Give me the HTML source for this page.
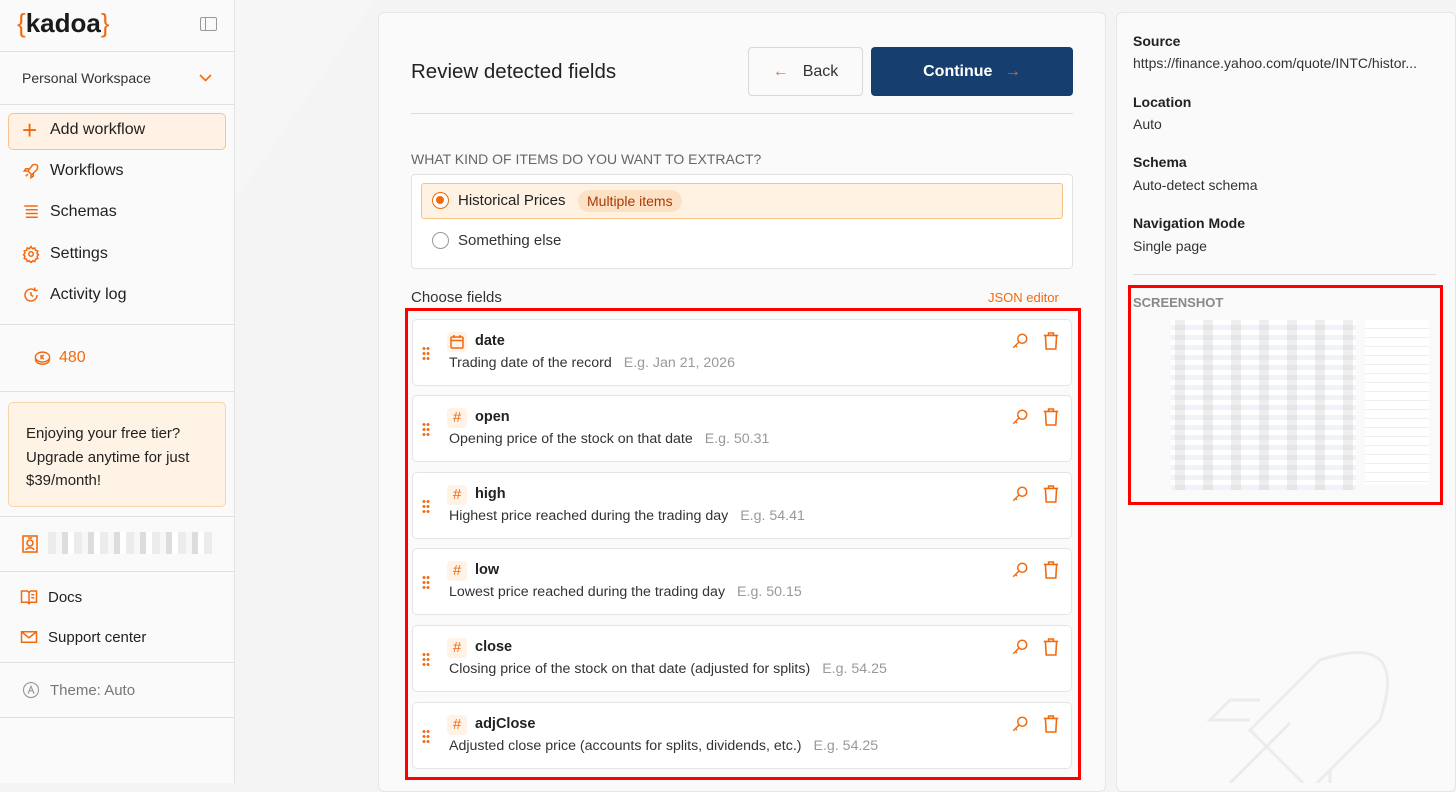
<!DOCTYPE html>
<html><head><meta charset="utf-8"><style>
*{box-sizing:border-box;margin:0;padding:0}
body{width:1456px;height:783px;overflow:hidden;background:#f4f4f4;font-family:"Liberation Sans",sans-serif;color:#1f1f1f;position:relative}
.sb{position:absolute;left:0;top:0;width:235px;height:783px;background:#fafafa;border-right:1px solid #e2e2e2}
.hr{position:absolute;left:0;width:234px;height:1px;background:#e0e0e0}
.nav{position:absolute;left:22px;font-size:16px;display:flex;align-items:center;gap:10px}
.nav svg{width:18px;height:18px}
.o{color:#f26a0f}
.card{position:absolute;left:378px;top:12px;width:728px;height:780px;background:#fafafa;border:1px solid #e6e6e6;border-radius:6px}
.rp{position:absolute;left:1116px;top:12px;width:340px;height:780px;background:#fafafa;border:1px solid #e6e6e6;border-radius:6px}
.f{position:absolute;left:412px;width:660px;height:67px;background:#fff;border:1px solid #e4e4e4;border-radius:5px}
.f .n{position:absolute;left:62px;top:13px;font-size:14.5px;font-weight:bold;color:#222}
.f .d{position:absolute;left:36px;top:35px;font-size:14.2px;color:#333}
.f .d span{color:#999;margin-left:12px}
.f .ic{position:absolute;left:34px;top:12px;width:20px;height:20px;background:#fff3e8;border-radius:4px;color:#f26a0f;font-size:15px;text-align:center;line-height:20px}
.f .dots{position:absolute;left:9px;top:26px;width:8px;height:14px;background:radial-gradient(circle,#f26a0f 1.3px,transparent 1.6px) 0 0/4px 5px}
.f .k{position:absolute;left:598px;top:12px}
.f .t{position:absolute;left:630px;top:12px}
.lbl{position:absolute;left:1133px;font-size:14px;font-weight:bold;color:#222}
.val{position:absolute;left:1133px;font-size:14px;color:#333}
</style></head><body>
<svg style="position:absolute;left:235px;top:0" width="1221" height="783"><polygon points="0,0 140,0 0,200" fill="#f6f6f6"/><polygon points="1221,500 1000,783 1221,783" fill="#f7f7f7"/></svg>
<div class="sb">
 <div style="position:absolute;left:17px;top:8px;font-size:26px;letter-spacing:0px;color:#1a1a1a"><span class="o">{</span><b>kadoa</b><span class="o">}</span></div>
 <div style="position:absolute;left:200px;top:17px;width:17px;height:14px;border:1.5px solid #999;border-radius:2px"><div style="width:5px;height:100%;border-right:1.5px solid #999"></div></div>
 <div class="hr" style="top:51px"></div>
 <div style="position:absolute;left:22px;top:70px;font-size:14px;color:#333">Personal Workspace</div>
 <svg style="position:absolute;left:199px;top:74px" width="13" height="8" viewBox="0 0 13 8" fill="none" stroke="#f26a0f" stroke-width="1.6"><path d="M1 1l5.5 5.5L12 1"/></svg>
 <div class="hr" style="top:104px"></div>
 <div style="position:absolute;left:8px;top:113px;width:218px;height:37px;background:#fff1e3;border:1px solid #f7c28e;border-radius:5px"></div>
 <div class="nav" style="top:121px"><span class="o" style="font-size:26px;line-height:18px;width:18px">+</span>Add workflow</div>
 <div class="nav" style="top:162px"><svg viewBox="0 0 24 24" fill="none" stroke="#f26a0f" stroke-width="2"><path d="M5 19l3-3M14 4c3-1 5-1 6 0 1 1 1 3 0 6l-7 7-5-5zM9 9H5l-2 3h4M15 15v4l-3 2v-4"/></svg>Workflows</div>
 <div class="nav" style="top:203px"><svg viewBox="0 0 24 24" fill="none" stroke="#f26a0f" stroke-width="2"><path d="M3 4h18M5 9h16M5 14h16M5 19h16"/></svg>Schemas</div>
 <div class="nav" style="top:245px"><svg viewBox="0 0 24 24" fill="none" stroke="#f26a0f" stroke-width="2"><circle cx="12" cy="12" r="3"/><path d="M12 2l2 3 3-1 1 3 3 1-1 3 2 2-2 2 1 3-3 1-1 3-3-1-2 3-2-3-3 1-1-3-3-1 1-3-2-2 2-2-1-3 3-1 1-3 3 1z"/></svg>Settings</div>
 <div class="nav" style="top:286px"><svg viewBox="0 0 24 24" fill="none" stroke="#f26a0f" stroke-width="2"><path d="M20 12a8 8 0 1 1-3-6.2M17 2v4h4M12 8v4l3 2"/></svg>Activity log</div>
 <div class="hr" style="top:324px"></div>
 <div class="o" style="position:absolute;left:34px;top:349px;font-size:16px;display:flex;gap:8px;align-items:center"><svg width="17" height="15" viewBox="0 0 24 20" fill="none" stroke="#f26a0f" stroke-width="2"><ellipse cx="12" cy="8" rx="10" ry="7"/><path d="M2 11c0 4 4 7 10 7s10-3 10-7M10 5v6M10 8l4-3M11 8l3 3"/></svg>480</div>
 <div class="hr" style="top:391px"></div>
 <div style="position:absolute;left:8px;top:402px;width:218px;height:105px;background:#fff3e6;border:1px solid #f8d3ac;border-radius:5px;padding:19px 17px;font-size:15px;line-height:23.5px;color:#222">Enjoying your free tier? Upgrade anytime for just $39/month!</div>
 <div class="hr" style="top:516px"></div>
 <svg style="position:absolute;left:22px;top:535px" width="16" height="18" viewBox="0 0 16 18" fill="none" stroke="#f26a0f" stroke-width="1.6"><rect x="1" y="1" width="14" height="16"/><circle cx="8" cy="8" r="3"/><path d="M4 15c1-3 7-3 8 0M6 3h4"/></svg>
 <div style="position:absolute;left:48px;top:532px;width:164px;height:22px;background:repeating-linear-gradient(90deg,#ececec 0 8px,#f7f7f7 8px 14px,#dddddd 14px 20px,#fff 20px 26px)"></div>
 <div class="hr" style="top:571px"></div>
 <div class="nav" style="top:588px;font-size:15px;left:20px"><svg viewBox="0 0 24 24" fill="none" stroke="#f26a0f" stroke-width="2"><path d="M2 4h8l2 2 2-2h8v15h-8l-2 2-2-2H2zM12 6v15M15 9h4M15 13h4"/></svg>Docs</div>
 <div class="nav" style="top:628px;font-size:15px;left:20px"><svg viewBox="0 0 24 24" fill="none" stroke="#f26a0f" stroke-width="2"><rect x="2" y="5" width="20" height="14"/><path d="M2 5l10 8 10-8"/></svg>Support center</div>
 <div class="hr" style="top:662px"></div>
 <div class="nav" style="top:681px;font-size:15px;left:22px;color:#777"><svg viewBox="0 0 24 24" fill="none" stroke="#999" stroke-width="1.5"><circle cx="12" cy="12" r="10"/><path d="M8 17l4-10 4 10M9.5 13h5"/></svg>Theme: Auto</div>
 <div class="hr" style="top:717px"></div>
</div>

<div class="card"></div>
<div style="position:absolute;left:411px;top:60px;font-size:20.5px;color:#222">Review detected fields</div>
<div style="position:absolute;left:748px;top:47px;width:115px;height:49px;background:#fafafa;border:1px solid #d8d8d8;border-radius:4px;font-size:16px;line-height:47px;text-align:center;color:#333"><span class="o" style="margin-right:14px">←</span>Back</div>
<div style="position:absolute;left:871px;top:47px;width:202px;height:49px;background:#163f70;border-radius:4px;font-size:16px;font-weight:bold;line-height:49px;text-align:center;color:#fff">Continue <span class="o" style="font-weight:normal;margin-left:8px">→</span></div>
<div style="position:absolute;left:411px;top:113px;width:662px;height:1px;background:#ddd"></div>
<div style="position:absolute;left:411px;top:151px;font-size:14px;color:#666">WHAT KIND OF ITEMS DO YOU WANT TO EXTRACT?</div>
<div style="position:absolute;left:411px;top:174px;width:662px;height:95px;background:#fff;border:1px solid #e2e2e2;border-radius:4px"></div>
<div style="position:absolute;left:421px;top:183px;width:642px;height:36px;background:#fff2e3;border:1px solid #f6c386;border-radius:3px"></div>
<div style="position:absolute;left:432px;top:192px;width:17px;height:17px;border:1.5px solid #f26a0f;border-radius:50%;background:#fff"><div style="margin:3px;width:8px;height:8px;background:#f26a0f;border-radius:50%"></div></div>
<div style="position:absolute;left:458px;top:192px;font-size:15px;color:#222">Historical Prices</div>
<div style="position:absolute;left:578px;top:190px;height:22px;padding:0 9px;background:#fde1c4;border-radius:11px;font-size:14px;line-height:22px;color:#a83a08">Multiple items</div>
<div style="position:absolute;left:432px;top:232px;width:17px;height:17px;border:1px solid #999;border-radius:50%"></div>
<div style="position:absolute;left:458px;top:232px;font-size:15px;color:#333">Something else</div>
<div style="position:absolute;left:411px;top:289px;font-size:15px;color:#333">Choose fields</div>
<div class="o" style="position:absolute;left:988px;top:290px;font-size:13px">JSON editor</div>

<div class="f" style="top:319px"><div class="dots"></div><div class="ic"><svg width="14" height="14" viewBox="0 0 14 14" fill="none" stroke="#f26a0f" stroke-width="1.5" style="margin-top:3px"><rect x="1" y="2" width="12" height="11" rx="1"/><path d="M1 5.5h12M4 0v3M10 0v3"/></svg></div><div class="n">date</div><div class="d">Trading date of the record<span>E.g. Jan 21, 2026</span></div>
<svg class="k" width="18" height="18" viewBox="0 0 24 24" fill="none" stroke="#f26a0f" stroke-width="2"><circle cx="15" cy="9" r="6"/><path d="M11 13l-8 8M6 18l2 2"/></svg><svg class="t" width="16" height="18" viewBox="0 0 20 22" fill="none" stroke="#f26a0f" stroke-width="2"><path d="M1 4h18M7 4V1h6v3M3 4l1 17h12l1-17"/></svg></div>
<div class="f" style="top:395px"><div class="dots"></div><div class="ic">#</div><div class="n">open</div><div class="d">Opening price of the stock on that date<span>E.g. 50.31</span></div>
<svg class="k" width="18" height="18" viewBox="0 0 24 24" fill="none" stroke="#f26a0f" stroke-width="2"><circle cx="15" cy="9" r="6"/><path d="M11 13l-8 8M6 18l2 2"/></svg><svg class="t" width="16" height="18" viewBox="0 0 20 22" fill="none" stroke="#f26a0f" stroke-width="2"><path d="M1 4h18M7 4V1h6v3M3 4l1 17h12l1-17"/></svg></div>
<div class="f" style="top:472px"><div class="dots"></div><div class="ic">#</div><div class="n">high</div><div class="d">Highest price reached during the trading day<span>E.g. 54.41</span></div>
<svg class="k" width="18" height="18" viewBox="0 0 24 24" fill="none" stroke="#f26a0f" stroke-width="2"><circle cx="15" cy="9" r="6"/><path d="M11 13l-8 8M6 18l2 2"/></svg><svg class="t" width="16" height="18" viewBox="0 0 20 22" fill="none" stroke="#f26a0f" stroke-width="2"><path d="M1 4h18M7 4V1h6v3M3 4l1 17h12l1-17"/></svg></div>
<div class="f" style="top:548px"><div class="dots"></div><div class="ic">#</div><div class="n">low</div><div class="d">Lowest price reached during the trading day<span>E.g. 50.15</span></div>
<svg class="k" width="18" height="18" viewBox="0 0 24 24" fill="none" stroke="#f26a0f" stroke-width="2"><circle cx="15" cy="9" r="6"/><path d="M11 13l-8 8M6 18l2 2"/></svg><svg class="t" width="16" height="18" viewBox="0 0 20 22" fill="none" stroke="#f26a0f" stroke-width="2"><path d="M1 4h18M7 4V1h6v3M3 4l1 17h12l1-17"/></svg></div>
<div class="f" style="top:625px"><div class="dots"></div><div class="ic">#</div><div class="n">close</div><div class="d">Closing price of the stock on that date (adjusted for splits)<span>E.g. 54.25</span></div>
<svg class="k" width="18" height="18" viewBox="0 0 24 24" fill="none" stroke="#f26a0f" stroke-width="2"><circle cx="15" cy="9" r="6"/><path d="M11 13l-8 8M6 18l2 2"/></svg><svg class="t" width="16" height="18" viewBox="0 0 20 22" fill="none" stroke="#f26a0f" stroke-width="2"><path d="M1 4h18M7 4V1h6v3M3 4l1 17h12l1-17"/></svg></div>
<div class="f" style="top:702px"><div class="dots"></div><div class="ic">#</div><div class="n">adjClose</div><div class="d">Adjusted close price (accounts for splits, dividends, etc.)<span>E.g. 54.25</span></div>
<svg class="k" width="18" height="18" viewBox="0 0 24 24" fill="none" stroke="#f26a0f" stroke-width="2"><circle cx="15" cy="9" r="6"/><path d="M11 13l-8 8M6 18l2 2"/></svg><svg class="t" width="16" height="18" viewBox="0 0 20 22" fill="none" stroke="#f26a0f" stroke-width="2"><path d="M1 4h18M7 4V1h6v3M3 4l1 17h12l1-17"/></svg></div>
<div style="position:absolute;left:405px;top:308px;width:676px;height:472px;border:3px solid #f00"></div>

<div class="rp"></div>
<div class="lbl" style="top:33px">Source</div><div class="val" style="top:55px">https://finance.yahoo.com/quote/INTC/histor...</div>
<div class="lbl" style="top:94px">Location</div><div class="val" style="top:116px">Auto</div>
<div class="lbl" style="top:154px">Schema</div><div class="val" style="top:177px">Auto-detect schema</div>
<div class="lbl" style="top:215px">Navigation Mode</div><div class="val" style="top:238px">Single page</div>
<div style="position:absolute;left:1133px;top:274px;width:303px;height:1px;background:#ddd"></div>
<div style="position:absolute;left:1133px;top:295px;font-size:13px;font-weight:bold;color:#888">SCREENSHOT</div>
<div style="position:absolute;left:1171px;top:320px;width:185px;height:170px;background:repeating-linear-gradient(180deg,#fff 0 5px,#f0f3f7 5px 10px)"><div style="height:100%;background:repeating-linear-gradient(90deg,transparent 0 4px,#bbb 4px 14px,transparent 14px 28px);opacity:.25"></div></div>
<div style="position:absolute;left:1365px;top:320px;width:64px;height:165px;background:repeating-linear-gradient(180deg,#fff 0 8px,#eee 8px 9px)"></div>
<div style="position:absolute;left:1128px;top:285px;width:315px;height:220px;border:3px solid #f00"></div>
<svg style="position:absolute;left:1200px;top:640px" width="200" height="143" viewBox="0 0 200 143" fill="none" stroke="#ececec" stroke-width="3"><path d="M30 143l60-60M120 20c30-10 50-10 60 0s10 30 0 60l-70 70-60-60zM60 60H30l-20 20h40M130 130v30"/></svg>
</body></html>
